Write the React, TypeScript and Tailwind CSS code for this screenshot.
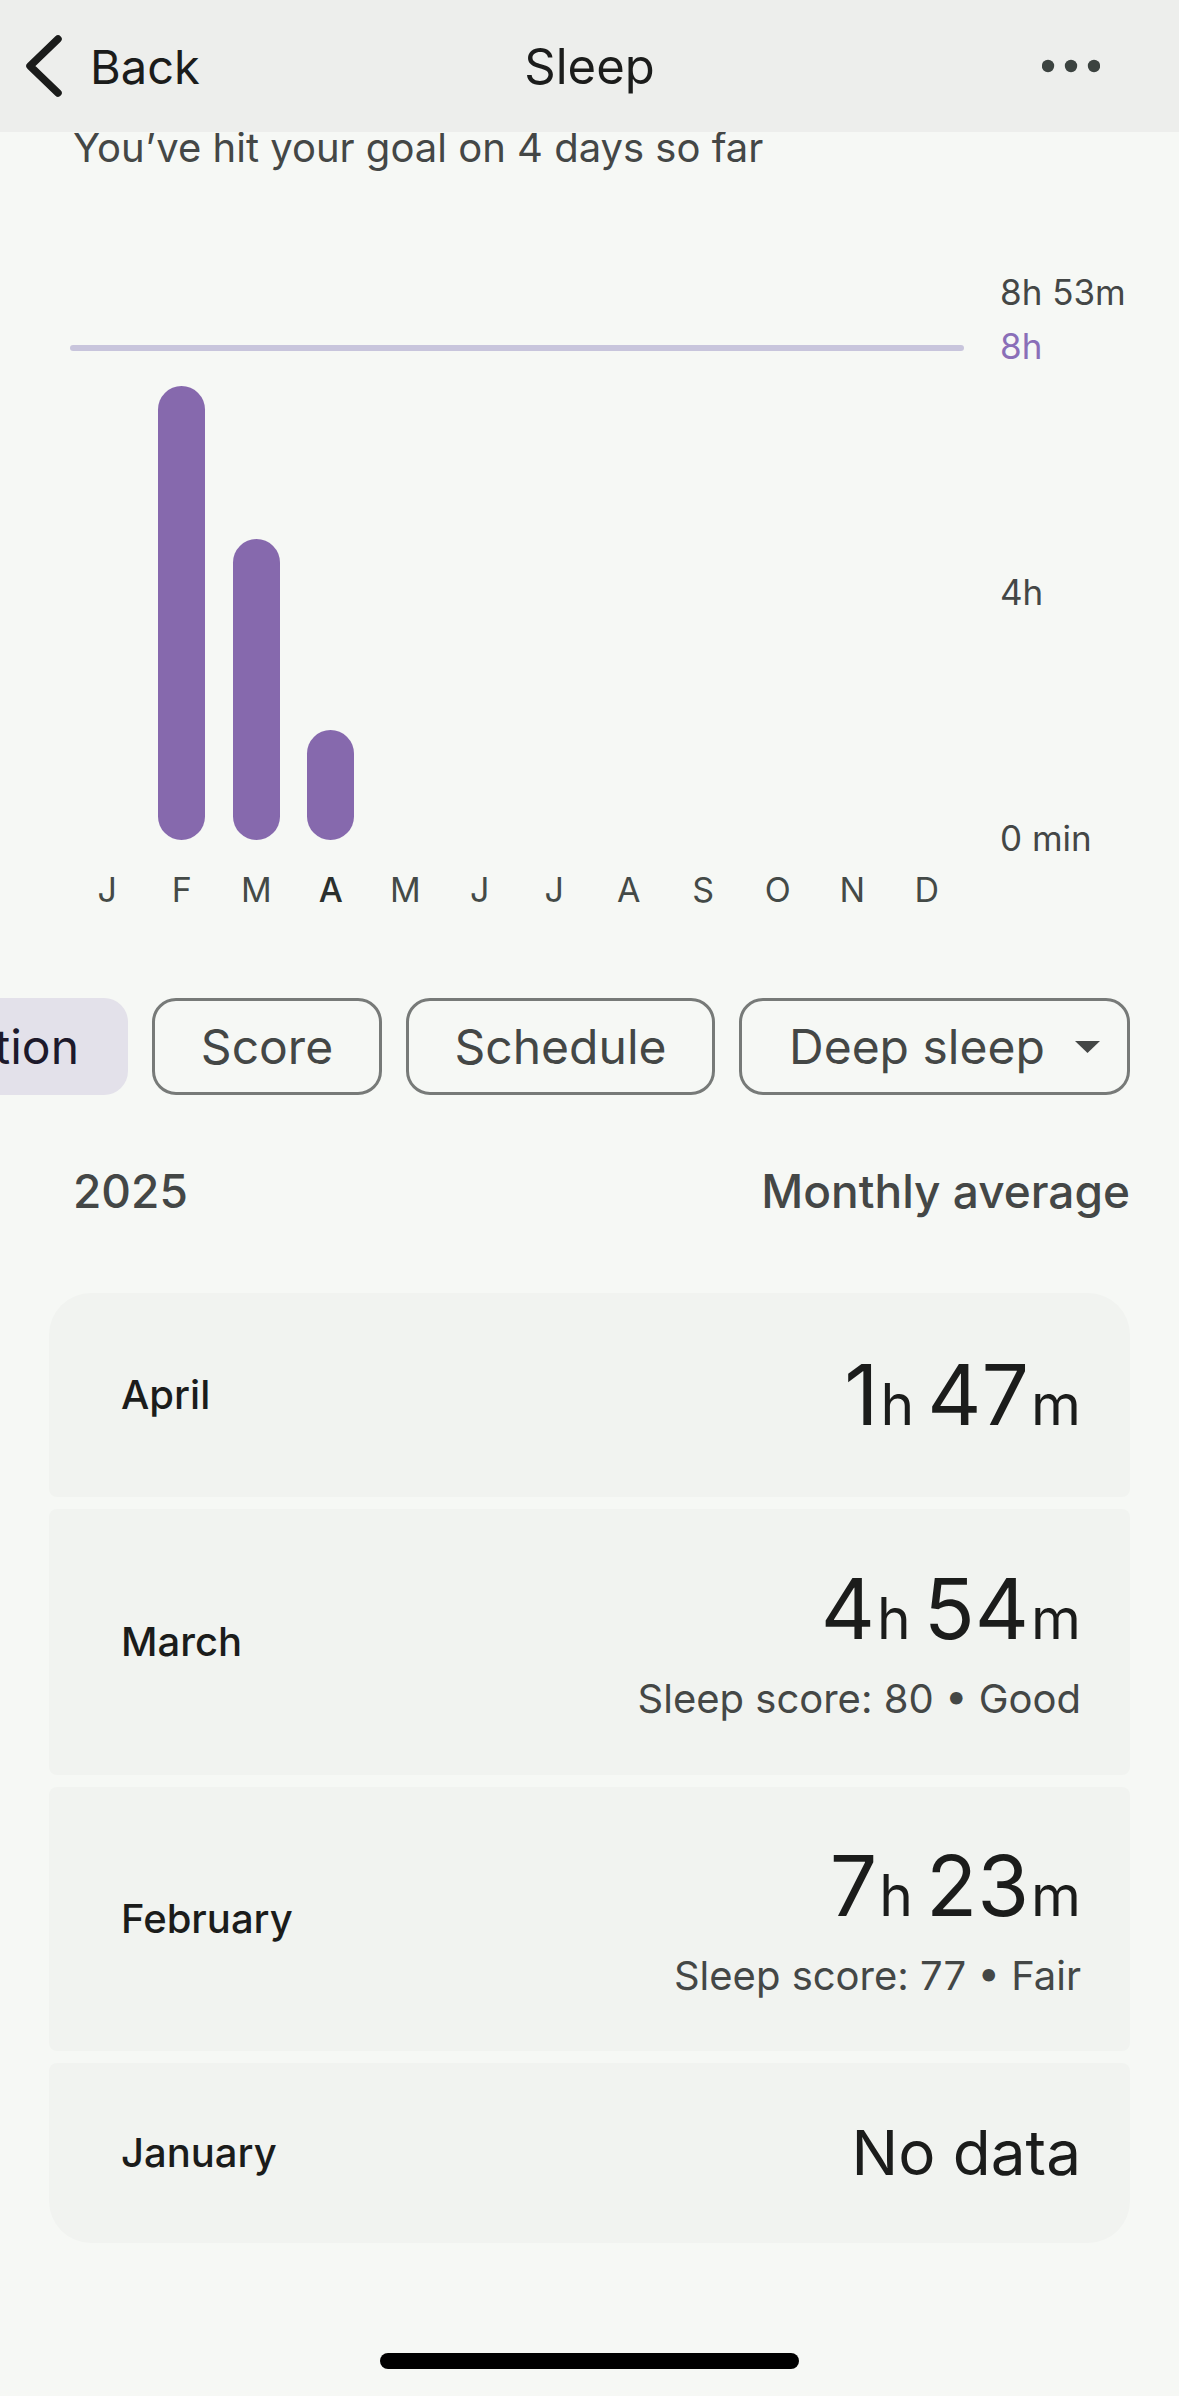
const MONTHS = ['J', 'F', 'M', 'A', 'M', 'J', 'J', 'A', 'S', 'O', 'N', 'D'];
// average minutes per month, 0 = no data
const MONTH_MINUTES = [0, 443, 294, 107, 0, 0, 0, 0, 0, 0, 0, 0];
const CURRENT_MONTH = 3;

const CHART_H = 580;
const PX_PER_MIN = 61.5 / 60;

const Y_LABELS = [
    { label: '8h 53m', min: 533, goal: false },
    { label: '8h', min: 480, goal: true },
    { label: '4h', min: 240, goal: false },
    { label: '0 min', min: 0, goal: false },
];

const yFor = (min: number) => CHART_H - min * PX_PER_MIN;

function Header() {
    return (
        <div className="relative z-10 grid h-[132px] grid-cols-[1fr_auto_1fr] items-center bg-[#edeeec] text-[#1b1c1b]">
            <div className="flex items-center gap-[24px] pl-[24px]">
                <svg width="42" height="62" viewBox="0 0 42 62" fill="none">
                    <path d="M34 4 L6 31 L34 58" stroke="#1b1c1b" strokeWidth="7.5" strokeLinecap="round" strokeLinejoin="round" />
                </svg>
                <span className="text-[47px] leading-none">Back</span>
            </div>
            <span className="text-[49px] leading-none">Sleep</span>
            <div className="flex justify-end pr-[79px]">
                <svg width="58" height="14" viewBox="0 0 58 14">
                    <circle cx="6" cy="7" r="6.2" fill="#3c4340" />
                    <circle cx="29" cy="7" r="6.2" fill="#3c4340" />
                    <circle cx="52" cy="7" r="6.2" fill="#3c4340" />
                </svg>
            </div>
        </div>
    );
}

function Chart() {
    return (
        <>
            <div className="relative mt-[96px] h-[580px]">
                {/* goal line */}
                <div
                    className="absolute left-[70px] h-[6px] w-[894px] rounded-full bg-[#c8c5dc]"
                    style={{ top: yFor(480) - 3 }}
                />
                <div className="ml-[70px] grid h-full w-[894px] grid-cols-12 items-end">
                    {MONTH_MINUTES.map((m, i) => (
                        <div key={i} className="flex justify-center">
                            {m > 0 && (
                                <div
                                    className="w-[47px] rounded-full bg-[#8669ad]"
                                    style={{ height: m * PX_PER_MIN }}
                                />
                            )}
                        </div>
                    ))}
                </div>
                {Y_LABELS.map((l) => (
                    <span
                        key={l.label}
                        className={`absolute left-[1000px] -translate-y-1/2 text-[35px] leading-[42px] ${l.goal ? 'text-[#8a6fb8]' : 'text-[#444746]'}`}
                        style={{ top: yFor(l.min) - 2 }}
                    >
                        {l.label}
                    </span>
                ))}
            </div>
            <div className="ml-[70px] mt-[30px] grid w-[894px] grid-cols-12 text-center text-[34px] leading-[40px] text-[#444a47]">
                {MONTHS.map((m, i) => (
                    <span key={i} className={i === CURRENT_MONTH ? 'font-medium text-[#2b302d]' : ''}>
                        {m}
                    </span>
                ))}
            </div>
        </>
    );
}

function Chips() {
    const outline = 'flex h-[97px] shrink-0 items-center rounded-[24px] border-[3px] border-[#777a78] text-[48px] leading-none text-[#444746]';
    return (
        <div className="mt-[88px] flex justify-end gap-[24px] overflow-hidden pr-[49px]">
            <div className="flex h-[97px] shrink-0 items-center rounded-[24px] bg-[#e3e1ea] px-[49px] text-[48px] leading-none text-[#1d192b]">
                Duration
            </div>
            <div className={`${outline} w-[230px] justify-center`}>Score</div>
            <div className={`${outline} w-[309px] justify-center`}>Schedule</div>
            <div className={`${outline} w-[391px] justify-between pl-[47px] pr-[27px]`}>
                <span>Deep sleep</span>
                <svg width="25" height="12" viewBox="0 0 25 12">
                    <path d="M0 0 H25 L12.5 12 Z" fill="#444746" />
                </svg>
            </div>
        </div>
    );
}

function Duration({ h, m }: { h: string; m: string }) {
    return (
        <div className="whitespace-nowrap text-[84px] leading-[84px] text-[#1b1c1b]">
            <span className="leading-none">{h}</span>
            <span className="ml-[2px] text-[57px] leading-none">h</span>
            <span className="ml-[13px] leading-none">{m}</span>
            <span className="ml-[2px] text-[57px] leading-none">m</span>
        </div>
    );
}

type Row = {
    month: string;
    h?: string;
    m?: string;
    score?: string;
    height: string;
    radius: string;
};

const ROWS: Row[] = [
    { month: 'April', h: '1', m: '47', height: 'h-[204px]', radius: 'rounded-t-[42px] rounded-b-[8px]' },
    { month: 'March', h: '4', m: '54', score: 'Sleep score: 80 • Good', height: 'h-[266px]', radius: 'rounded-[8px]' },
    { month: 'February', h: '7', m: '23', score: 'Sleep score: 77 • Fair', height: 'h-[264px]', radius: 'rounded-[8px]' },
    { month: 'January', height: 'h-[180px]', radius: 'rounded-t-[8px] rounded-b-[42px]' },
];

function MonthCard({ row }: { row: Row }) {
    return (
        <div className={`flex items-center justify-between bg-[#f1f3f0] pl-[72px] pr-[49px] ${row.height} ${row.radius}`}>
            <span className="text-[40px] font-medium text-[#1b1c1b]">{row.month}</span>
            <div className={`flex flex-col items-end ${row.score ? 'pt-[6px]' : ''}`}>
                {row.h ? (
                    <Duration h={row.h} m={row.m!} />
                ) : (
                    <span className="text-[62px] leading-[80px] text-[#1b1c1b]">No data</span>
                )}
                {row.score && (
                    <span className="mt-[24px] text-[40px] leading-[48px] text-[#444746]">{row.score}</span>
                )}
            </div>
        </div>
    );
}

export default function App() {
    return (
        <div className="min-h-screen w-full bg-[#f6f8f5] font-[Inter,sans-serif] text-[#1b1c1b]">
            <Header />
            <p className="pl-[73px] text-[40px] leading-[32px] text-[#444746]">You’ve hit your goal on 4 days so far</p>

            <Chart />
            <Chips />

            <div className="mt-[69px] flex items-center justify-between pl-[73px] pr-[49px] text-[46px] font-medium leading-[54px] text-[#444746]">
                <span>2025</span>
                <span>Monthly average</span>
            </div>

            <div className="mx-[49px] mt-[75px] flex flex-col gap-[12px]">
                {ROWS.map((r) => (
                    <MonthCard key={r.month} row={r} />
                ))}
            </div>

            {/* home indicator */}
            <div className="flex justify-center pb-[27px] pt-[110px]">
                <div className="h-[16px] w-[419px] rounded-full bg-black" />
            </div>
        </div>
    );
}
